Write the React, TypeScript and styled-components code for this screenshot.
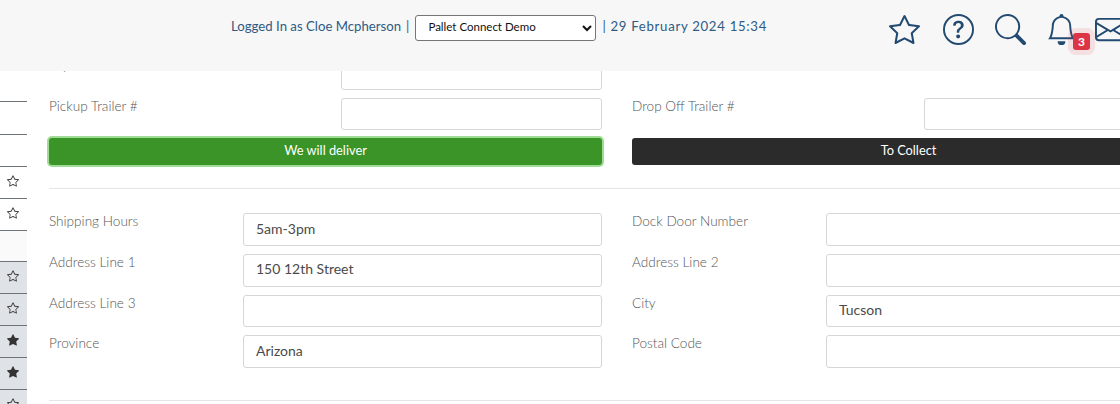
import { createGlobalStyle } from "styled-components";
import styled from "styled-components";
import { BsStar, BsStarFill, BsQuestionCircle, BsSearch, BsBell, BsEnvelope } from "react-icons/bs";

const GlobalStyle = createGlobalStyle`
  html, body {
    margin: 0;
    padding: 0;
    background: #fff;
    overflow: hidden;
  }
  * {
    box-sizing: border-box;
  }
`;

type SideRowData = { star: "none" | "empty" | "full"; tint?: "soft" | "grey"; height: number };

const sideRows: SideRowData[] = [
  { star: "none", height: 31 },
  { star: "none", height: 33 },
  { star: "none", height: 32 },
  { star: "empty", height: 32 },
  { star: "empty", height: 32 },
  { star: "none", tint: "soft", height: 31 },
  { star: "empty", tint: "grey", height: 32 },
  { star: "empty", tint: "grey", height: 32 },
  { star: "full", tint: "grey", height: 32 },
  { star: "full", tint: "grey", height: 32 },
  { star: "empty", tint: "grey", height: 32 },
];

const Field = ({ label, value, wide }: { label: string; value?: string; wide?: boolean }) => (
  <FieldRow $wide={wide}>
    <Label>{label}</Label>
    <TextInput defaultValue={value} />
  </FieldRow>
);

const App = () => {
  return (
    <Page>
      <GlobalStyle />
      <Header>
        <Status>
          <StatusText>Logged In as Cloe Mcpherson</StatusText>
          <StatusText>|</StatusText>
          <CompanySelect defaultValue="demo">
            <option value="demo">Pallet Connect Demo</option>
          </CompanySelect>
          <DateText>| 29 February 2024 15:34</DateText>
        </Status>
        <Icons>
          <BsStar />
          <BsQuestionCircle />
          <BsSearch />
          <BellWrap>
            <BsBell />
            <Badge>3</Badge>
          </BellWrap>
          <BsEnvelope />
        </Icons>
      </Header>
      <Body>
        <Sidebar>
          {sideRows.map((row, i) => (
            <SideRow key={i} $tint={row.tint} style={{ height: row.height }}>
              {row.star === "empty" && <BsStar />}
              {row.star === "full" && <BsStarFill />}
            </SideRow>
          ))}
        </Sidebar>
        <Main>
          <TopGrid>
            <Field label="Trip #" wide />
            <div />
            <Field label="Pickup Trailer #" wide />
            <Field label="Drop Off Trailer #" wide />
            <DeliverButton>We will deliver</DeliverButton>
            <CollectButton>To Collect</CollectButton>
          </TopGrid>
          <Divider />
          <AddressGrid>
            <Field label="Shipping Hours" value="5am-3pm" />
            <Field label="Dock Door Number" />
            <Field label="Address Line 1" value="150 12th Street" />
            <Field label="Address Line 2" />
            <Field label="Address Line 3" />
            <Field label="City" value="Tucson" />
            <Field label="Province" value="Arizona" />
            <Field label="Postal Code" />
          </AddressGrid>
          <Divider />
        </Main>
      </Body>
    </Page>
  );
};

export default App;

const Page = styled.div`
  width: 1120px;
  height: 404px;
  overflow: hidden;
  font-family: Lato, "Open Sans", sans-serif;
`;

const Header = styled.div`
  height: 71px;
  background: #f7f7f8;
  display: flex;
  padding-left: 231px;
`;

const Status = styled.div`
  display: flex;
  align-items: center;
  gap: 5px;
  height: 56px;
  font-size: 13.2px;
  color: #2f5a82;
  white-space: nowrap;
`;

const StatusText = styled.span`
  margin-bottom: 4px;
`;

const CompanySelect = styled.select`
  width: 181px;
  height: 26px;
  margin-left: 1px;
  padding: 0 0 4px 8px;
  background: #fff;
  border: 1px solid #767676;
  border-radius: 3px;
  font-family: Lato, sans-serif;
  font-size: 11.5px;
  color: #111;
`;

const DateText = styled(StatusText)`
  margin-left: 1px;
  letter-spacing: 0.7px;
`;

const Icons = styled.div`
  display: flex;
  align-items: flex-start;
  gap: 21px;
  margin-left: 122px;
  padding-top: 14px;
  color: #234a70;
  flex-shrink: 0;

  svg {
    width: 31px;
    height: 31px;
    display: block;
  }

  svg:first-child {
    margin-right: 2px;
  }
`;

const BellWrap = styled.div`
  position: relative;
  width: 27px;

  svg {
    margin-left: -1px;
  }
`;

const Badge = styled.span`
  position: absolute;
  left: 26px;
  top: 19px;
  width: 17px;
  height: 17px;
  border-radius: 3px;
  background: #dc3545;
  box-shadow: 0 0 0 5px rgba(220, 53, 69, 0.12);
  color: #fff;
  font-size: 12px;
  font-weight: 700;
  line-height: 17px;
  text-align: center;
`;

const Body = styled.div`
  display: flex;
  height: 333px;
`;

const Sidebar = styled.div`
  width: 27px;
  flex-shrink: 0;
  background: #fff;
`;

const SideRow = styled.div<{ $tint?: "soft" | "grey" }>`
  display: flex;
  align-items: center;
  justify-content: center;
  padding: 0 2px 4px 0;
  border-bottom: 1px solid #6f7479;
  background: ${(p) => (p.$tint === "grey" ? "#dfe2e6" : p.$tint === "soft" ? "#fafafa" : "#fff")};
  color: #333;

  svg {
    width: 12px;
    height: 12px;
  }
`;

const Main = styled.div`
  flex: 1;
  overflow: hidden;
  padding-left: 22px;
  color: #555;
`;

const Grid = styled.div`
  display: grid;
  grid-template-columns: 553px 553px;
  column-gap: 30px;
  row-gap: 8px;
`;

const TopGrid = styled(Grid)`
  margin-top: -14px;
`;

const AddressGrid = styled(Grid)`
  padding-bottom: 9px;
`;

const FieldRow = styled.div<{ $wide?: boolean }>`
  display: grid;
  grid-template-columns: ${(p) => (p.$wide ? "291.5px" : "194px")} 1fr;
`;

const Label = styled.label`
  font-size: 13.6px;
  font-weight: 300;
  line-height: 16px;
  color: #555;
`;

const TextInput = styled.input`
  width: 100%;
  height: 32.67px;
  padding: 0 12px 3px;
  background: #fff;
  border: 1px solid #d5d6d8;
  border-radius: 3px;
  font-family: Lato, sans-serif;
  font-size: 14px;
  color: #4a4a4a;
  outline: none;
`;

const ActionButton = styled.button`
  height: 27px;
  padding: 0 0 3px;
  border: none;
  border-radius: 3px;
  color: #fff;
  font-family: Lato, sans-serif;
  font-size: 12.8px;
`;

const DeliverButton = styled(ActionButton)`
  background: #3a9428;
  box-shadow: 0 0 0 2px #9fdc95;
`;

const CollectButton = styled(ActionButton)`
  background: #2b2b2b;
`;

const Divider = styled.hr`
  width: 1136px;
  height: 1px;
  margin: 23px 0 24px;
  border: none;
  background: #e6e6e6;
`;
